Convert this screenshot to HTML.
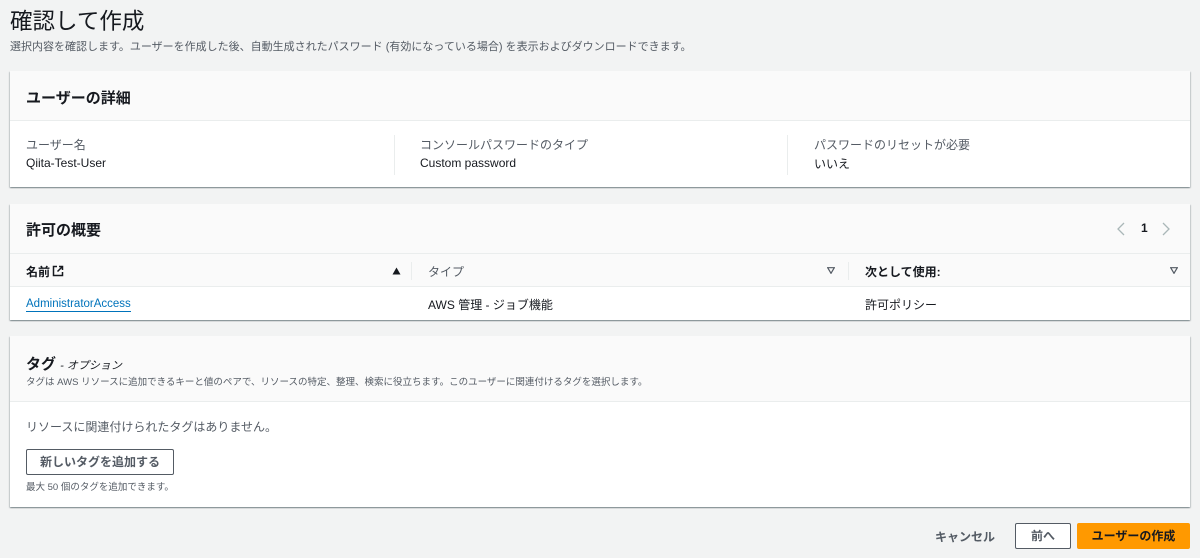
<!DOCTYPE html>
<html><head><meta charset="utf-8"><style>
*{box-sizing:border-box;margin:0;padding:0}
body{width:1200px;height:558px;overflow:hidden;background:#f2f3f3;font-family:"Liberation Sans","Noto Sans CJK JP",sans-serif;color:#16191f;position:relative}
.abs{position:absolute}
.card{position:absolute;left:10px;width:1180px;background:#fff;box-shadow:0 1px 1px 0 rgba(0,28,36,.3),1px 1px 1px 0 rgba(0,28,36,.15),-1px 1px 1px 0 rgba(0,28,36,.15);}
.hdr{background:#fafafa;border-bottom:1px solid #eaeded;position:relative}
.h2{font-size:15px;font-weight:bold;position:absolute;left:16px}
.lbl{font-size:12px;color:#545b64;position:absolute}
.val{font-size:12px;position:absolute}
.th{font-size:12px;font-weight:bold;position:absolute;top:9px}
.sep{position:absolute;width:1px;background:#eaeded}
</style></head><body>
<div class="abs" style="left:10px;top:4px;font-size:22.5px;">確認して作成</div>
<div class="abs" style="left:10px;top:38px;font-size:11px;color:#545b64">選択内容を確認します。ユーザーを作成した後、自動生成されたパスワード (有効になっている場合) を表示およびダウンロードできます。</div>

<div class="card" style="top:71px;height:116px">
 <div class="hdr" style="height:50px"><div class="h2" style="top:16px">ユーザーの詳細</div></div>
 <div class="lbl" style="left:16px;top:65px">ユーザー名</div>
 <div class="val" style="left:16px;top:85px">Qiita-Test-User</div>
 <div class="sep" style="left:384px;top:64px;height:40px"></div>
 <div class="lbl" style="left:410px;top:65px">コンソールパスワードのタイプ</div>
 <div class="val" style="left:410px;top:85px">Custom password</div>
 <div class="sep" style="left:777px;top:64px;height:40px"></div>
 <div class="lbl" style="left:804px;top:65px">パスワードのリセットが必要</div>
 <div class="val" style="left:804px;top:84px">いいえ</div>
</div>

<div class="card" style="top:204px;height:116px">
 <div class="hdr" style="height:50px;border-bottom:1px solid #eaeded"><div class="h2" style="top:15px">許可の概要</div>
  <svg class="abs" style="left:1106px;top:18px" width="10" height="14"><path d="M8 1L2 7l6 6" stroke="#aab7b8" stroke-width="1.3" fill="none"/></svg>
  <div class="abs" style="left:1131px;top:17px;font-size:12px;font-weight:bold">1</div>
  <svg class="abs" style="left:1151px;top:18px" width="10" height="14"><path d="M2 1l6 6-6 6" stroke="#aab7b8" stroke-width="1.3" fill="none"/></svg>
 </div>
 <div style="position:absolute;top:50px;left:0;width:1180px;height:33px;background:#fafafa;border-bottom:1px solid #eaeded">
  <div class="th" style="left:16px">名前</div>
  <svg class="abs" style="left:42px;top:11px" width="12" height="12"><path d="M5 1.5H1.5v9h9V7M7 1.5h3.5V5M10.5 1.5L5.5 6.5" stroke="#16191f" stroke-width="1.5" fill="none"/></svg>
  <svg class="abs" style="left:382px;top:13px" width="9" height="8"><path d="M0.5 7.5L4.5 0.5l4 7z" fill="#16191f"/></svg>
  <div class="sep" style="left:401px;top:8px;height:18px"></div>
  <div class="th" style="left:418px;font-weight:normal;color:#545b64">タイプ</div>
  <svg class="abs" style="left:817px;top:13px" width="8" height="7"><path d="M0.7 0.7h6.6L4 6.3z" fill="none" stroke="#545b64" stroke-width="1.2"/></svg>
  <div class="sep" style="left:838px;top:8px;height:18px"></div>
  <div class="th" style="left:855px">次として使用:</div>
  <svg class="abs" style="left:1160px;top:13px" width="8" height="7"><path d="M0.7 0.7h6.6L4 6.3z" fill="none" stroke="#545b64" stroke-width="1.2"/></svg>
 </div>
 <div class="val" style="left:16px;top:93px;font-size:11.5px;color:#0073bb;border-bottom:1px solid #0073bb;line-height:14px">AdministratorAccess</div>
 <div class="val" style="left:418px;top:92px">AWS 管理 - ジョブ機能</div>
 <div class="val" style="left:855px;top:92px">許可ポリシー</div>
</div>

<div class="card" style="top:336px;height:171px">
 <div class="hdr" style="height:66px">
  <div class="abs" style="left:16px;top:17px;font-size:15px;font-weight:bold">タグ <span style="font-size:11px;font-style:italic;font-weight:normal">- オプション</span></div>
  <div class="abs" style="left:16px;top:38px;font-size:9.5px;color:#545b64">タグは AWS リソースに追加できるキーと値のペアで、リソースの特定、整理、検索に役立ちます。このユーザーに関連付けるタグを選択します。</div>
 </div>
 <div class="lbl" style="left:16px;top:82px">リソースに関連付けられたタグはありません。</div>
 <div class="abs" style="left:16px;top:113px;width:148px;height:26px;border:1px solid #545b64;border-radius:2px;font-size:12px;font-weight:bold;color:#545b64;text-align:center;line-height:24px">新しいタグを追加する</div>
 <div class="abs" style="left:16px;top:143px;font-size:9.5px;color:#545b64">最大 50 個のタグを追加できます。</div>
</div>

<div class="abs" style="left:935px;top:528px;font-size:12px;font-weight:bold;color:#545b64">キャンセル</div>
<div class="abs" style="left:1015px;top:523px;width:56px;height:26px;border:1px solid #545b64;border-radius:2px;background:#fff;font-size:12px;font-weight:bold;color:#545b64;text-align:center;line-height:24px">前へ</div>
<div class="abs" style="left:1077px;top:523px;width:113px;height:26px;background:#ff9900;border-radius:2px;font-size:12px;font-weight:bold;color:#16191f;text-align:center;line-height:26px">ユーザーの作成</div>
</body></html>
